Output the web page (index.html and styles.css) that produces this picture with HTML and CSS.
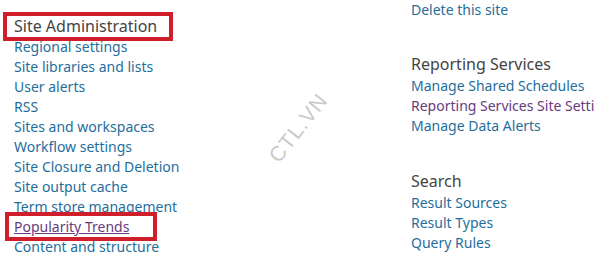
FILE: index.html
```html
<!DOCTYPE html>
<html lang="en">
<head>
    <meta charset="UTF-8">
    <title>Site Settings</title>
    <link rel="stylesheet" href="styles.css">
</head>
<body>
    <main class="settings">
        <section class="column column-left">
            <h2 class="group-title highlight">Site Administration</h2>
            <ul class="links">
                <li><a href="#">Regional settings</a></li>
                <li><a href="#">Site libraries and lists</a></li>
                <li><a href="#">User alerts</a></li>
                <li><a href="#">RSS</a></li>
                <li><a href="#">Sites and workspaces</a></li>
                <li><a href="#">Workflow settings</a></li>
                <li><a href="#">Site Closure and Deletion</a></li>
                <li><a href="#">Site output cache</a></li>
                <li><a href="#">Term store management</a></li>
                <li><a href="#" class="visited underline highlight">Popularity Trends</a></li>
                <li><a href="#">Content and structure</a></li>
                <li><a href="#">Content and structure logs</a></li>
            </ul>
        </section>

        <section class="column column-right">
            <ul class="links">
                <li><a href="#">Delete this site</a></li>
            </ul>

            <h2 class="group-title">Reporting Services</h2>
            <ul class="links">
                <li><a href="#">Manage Shared Schedules</a></li>
                <li><a href="#" class="visited">Reporting Services Site Settings</a></li>
                <li><a href="#">Manage Data Alerts</a></li>
            </ul>

            <h2 class="group-title group-search">Search</h2>
            <ul class="links">
                <li><a href="#">Result Sources</a></li>
                <li><a href="#">Result Types</a></li>
                <li><a href="#">Query Rules</a></li>
                <li><a href="#">Schema</a></li>
            </ul>
        </section>

        <div class="watermark">CTL.VN</div>
    </main>
</body>
</html>
```

FILE: styles.css
```css
body {
    margin: 0;
    background-color: #fff;
    font-family: "Noto Sans", "Open Sans", sans-serif;
    color: #444;
    overflow: hidden;
}

.settings {
    position: relative;
    display: grid;
    grid-template-columns: 411px 1fr;
    height: 257px;
    overflow: hidden;
}

.column-left {
    padding-left: 14px;
    padding-top: 15px;
}

.column-right {
    white-space: nowrap;
    overflow: hidden;
}

.group-title {
    margin: 0;
    font-size: 16px;
    font-weight: normal;
    line-height: 23px;
    color: #444;
}

.column-right .group-title {
    margin-top: 33px;
}

.column-right .group-search {
    margin-top: 34px;
}

.links {
    list-style: none;
    margin: 0;
    padding: 0;
}

.links li {
    font-size: 14px;
    line-height: 20px;
}

.links a {
    color: #1f6e9c;
    text-decoration: none;
}

.links a.visited {
    color: #683c7e;
}

.links a.underline {
    text-decoration: underline;
}

/* red frames drawn over the screenshot */
.highlight {
    outline: 4px solid #d01f2b;
}

.group-title.highlight {
    display: inline-block;
    line-height: 21px;
    margin-left: -7px;
    padding: 0 12px 0 7px;
}

.links a.highlight {
    margin-left: -5px;
    padding: 1px 24px 1px 5px;
}

.watermark {
    position: absolute;
    left: 258px;
    top: 116px;
    font-family: "Liberation Sans", sans-serif;
    font-size: 21px;
    color: #cacaca;
    transform: rotate(-52deg);
    letter-spacing: 1px;
}
```
